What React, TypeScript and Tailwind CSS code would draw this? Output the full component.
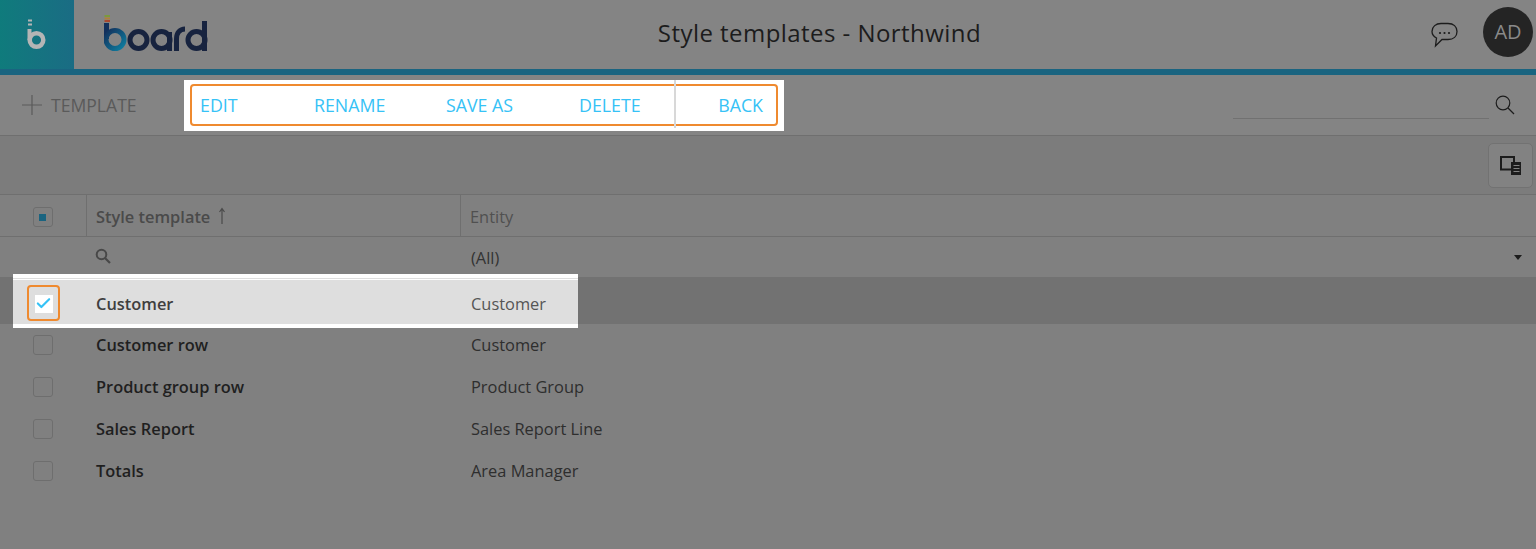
import { Check } from 'lucide-react'

const rows = [
  { name: 'Customer row', entity: 'Customer' },
  { name: 'Product group row', entity: 'Product Group' },
  { name: 'Sales Report', entity: 'Sales Report Line' },
  { name: 'Totals', entity: 'Area Manager' },
]

function BoardMark() {
  return (
    <svg width="24" height="32" viewBox="0 0 24 32" fill="none">
      <rect x="4" y="0.500" width="4" height="2" fill="#b5b5b5" />
      <rect x="4" y="4.500" width="4" height="2" fill="#b5b5b5" />
      <path d="M5.500 10v11" stroke="#b5b5b5" strokeWidth="4" />
      <circle cx="12.500" cy="21" r="6.800" stroke="#b5b5b5" strokeWidth="4.500" />
    </svg>
  )
}

function BoardLogo() {
  return (
    <svg width="104" height="37" viewBox="0 0 104 37" fill="none">
      <defs>
        <linearGradient id="logoB" x1="0" y1="0" x2="1" y2="1">
          <stop offset="0" stopColor="#12305c" />
          <stop offset="1" stopColor="#0f7ea0" />
        </linearGradient>
      </defs>
      <rect x="0.500" y="0" width="5.500" height="2" fill="#7c9a3c" />
      <rect x="0.500" y="2.500" width="5.500" height="2" fill="#b0803a" />
      <rect x="0.500" y="5" width="5.500" height="2" fill="#a8482f" />
      <path d="M2.500 8v16" stroke="#12305c" strokeWidth="5" />
      <circle cx="11" cy="24.500" r="9" stroke="url(#logoB)" strokeWidth="5" />
      <circle cx="34.500" cy="25" r="8.500" stroke="#17233f" strokeWidth="5" />
      <circle cx="57.500" cy="25" r="8.500" stroke="#17233f" strokeWidth="5" />
      <path d="M65.500 17v19" stroke="#17233f" strokeWidth="5" />
      <path d="M72.500 36V24c0-6 3.500-10 8.500-10" stroke="#17233f" strokeWidth="5" />
      <circle cx="92.500" cy="25" r="8.500" stroke="#17233f" strokeWidth="5" />
      <path d="M100.500 6v30" stroke="#17233f" strokeWidth="5" />
    </svg>
  )
}

function Box() {
  return <span className="block w-5 h-5 rounded-[3px] border border-[#6e6e6e]" />
}

export default function App() {
  return (
    <div
      className="relative w-full h-[549px] overflow-hidden bg-[#808080] text-[#272727]"
      style={{ fontFamily: '"Open Sans", sans-serif' }}
    >
      {/* Header */}
      <div className="flex items-stretch h-[75px] border-b-[6px] border-[#1a6480] bg-[#848484]">
        <div className="flex items-center justify-center w-[74px] pr-[2px] bg-gradient-to-r from-[#0f7b7c] to-[#1a6c84]">
          <BoardMark />
        </div>
        <div className="flex items-center pl-[30px] pb-[2px] w-[194px]">
          <BoardLogo />
        </div>
        <div className="flex-1 flex items-center justify-center text-[24px] text-[#1c1c1c] pb-[3px] tracking-[0.45px]">
          Style templates - Northwind
        </div>
        <div className="flex items-center w-[165px] justify-end pr-[3px]">
          <svg width="28" height="26" viewBox="0 0 28 26" fill="none" className="mr-[24px] mt-[1px]">
            <path
              d="M10 1.500h7c5.500 0 9 3 9 8s-3.500 8-9 8h-6l-6.500 6.500 1-8C2.700 14.500 1 12.300 1 9.500c0-5 4-8 9-8z"
              stroke="#1c1c1c"
              strokeWidth="1.300"
            />
            <circle cx="9" cy="11" r="1.100" fill="#1c1c1c" />
            <circle cx="13.500" cy="11" r="1.100" fill="#1c1c1c" />
            <circle cx="18" cy="11" r="1.100" fill="#1c1c1c" />
          </svg>
          <div className="flex items-center justify-center w-[50px] h-[50px] mb-[5px] rounded-full bg-[#242424] text-[#8a8a8a] text-[20px]">
            AD
          </div>
        </div>
      </div>

      {/* Toolbar */}
      <div className="flex items-center h-[61px] border-b border-[#6f6f6f] bg-[#848484]">
        <div className="flex items-center w-[184px] pl-[22px] text-[#5a5a5a] text-[17.600px]">
          <svg width="20" height="20" viewBox="0 0 20 20" fill="none" className="mr-[9px]">
            <path d="M10 0v20M0 10h20" stroke="#5a5a5a" strokeWidth="1.200" />
          </svg>
          TEMPLATE
        </div>
        <div className="flex items-center w-[600px] h-[51px] pl-[6px] pr-[6px] pt-[4px] pb-[5px] bg-white">
          <div className="flex items-center w-full h-full pt-[2px] rounded-[4px] border-2 border-[#ef8a2f] text-[#36c2f6] text-[17.800px]">
            <span className="w-[122px] pl-[8px]">EDIT</span>
            <span className="w-[132px]">RENAME</span>
            <span className="w-[133px]">SAVE AS</span>
            <span className="w-[96px]">DELETE</span>
            <span className="relative flex-1 text-right pr-[13px]">
              <span className="absolute left-[-1px] top-[-12px] bottom-[-9px] w-[2px] bg-[#d8d8d8]" />
              BACK
            </span>
          </div>
        </div>
        <div className="flex-1 flex items-center justify-end pr-[21px]">
          <span className="w-[256px] h-[22px] mt-[6px] border-b border-[#717171] mr-[6px]" />
          <svg width="20" height="20" viewBox="0 0 20 20" fill="none">
            <circle cx="8" cy="8" r="6.800" stroke="#1c1c1c" strokeWidth="1.200" />
            <path d="M13 13l6 6" stroke="#1c1c1c" strokeWidth="1.200" />
          </svg>
        </div>
      </div>

      {/* Grey band */}
      <div className="flex items-center justify-end h-[59px] pr-[3px] border-b border-[#6f6f6f] bg-[#7c7c7c]">
        <button className="flex items-center justify-center w-[45px] h-[45px] rounded-[5px] border border-[#727272] bg-[#828282]">
          <svg width="21" height="19" viewBox="0 0 21 19" fill="none">
            <path d="M1 1h13v12.500H1z" stroke="#1c1c1c" strokeWidth="2" />
            <rect x="11" y="6" width="10" height="13" fill="#1c1c1c" />
            <path d="M13.500 9.500h6M13.500 12.500h6M13.500 15.500h6" stroke="#828282" strokeWidth="1" />
          </svg>
        </button>
      </div>

      {/* Column headers */}
      <div className="flex h-[42px] border-b border-[#6f6f6f] text-[16.400px]">
        <div className="flex items-center justify-center w-[87px] pr-[1px] pt-[3px] border-r border-[#6f6f6f]">
          <span className="flex items-center justify-center w-5 h-5 rounded-[3px] border border-[#6e6e6e]">
            <span className="w-[7px] h-[7px] bg-[#1a6480]" />
          </span>
        </div>
        <div className="flex items-center w-[374px] pl-[9px] pt-[3px] border-r border-[#6f6f6f] text-[#4a4a4a] font-semibold">
          Style template
          <svg width="10" height="18" viewBox="0 0 10 18" fill="none" className="ml-[7px] mb-[3px]">
            <path d="M5 17V2M2.500 5 5 1.500 7.500 5" stroke="#4a4a4a" strokeWidth="1.200" />
          </svg>
        </div>
        <div className="flex items-center pl-[9px] pt-[3px] text-[#505050]">Entity</div>
      </div>

      {/* Filter row */}
      <div className="flex items-center h-[42px] border-b-2 border-[#727272] text-[16.400px]">
        <div className="w-[95px] shrink-0" />
        <svg width="16" height="16" viewBox="0 0 16 16" fill="none" className="mb-[3px]">
          <circle cx="6.500" cy="6.500" r="4.800" stroke="#484848" strokeWidth="2" />
          <path d="M10 10l5 5" stroke="#484848" strokeWidth="2.200" />
        </svg>
        <div className="w-[360px]" />
        <div className="flex-1 text-[#333333] pt-[3px]">(All)</div>
        <span className="mr-[14px] w-0 h-0 border-x-[4px] border-x-transparent border-t-[5px] border-t-[#1c1c1c]" />
      </div>

      {/* Selected row, spotlighted by the guide */}
      <div className="relative h-[45px] bg-[#727272] text-[16.400px]">
        <div className="absolute left-[13px] top-[-5px] flex items-center w-[565px] h-[54px] pt-[1px] border-y-[4px] border-white bg-[#dedede] shadow-[inset_0_1px_0_#dedede,inset_0_2px_0_#ffffff]">
          <span className="flex items-center justify-center ml-[14px] mt-[3px] w-[33px] h-[36px] rounded-[4px] border-2 border-[#ef8a2f]">
            <span className="flex items-center justify-center w-[18px] h-[18px] mt-[1px] bg-white">
              <Check size={17} strokeWidth={3} className="text-[#36c2f6]" />
            </span>
          </span>
          <span className="ml-[36px] mt-[6px] w-[375px] font-semibold text-[#3f3f3f]">Customer</span>
          <span className="mt-[6px] text-[#555555]">Customer</span>
        </div>
      </div>
      {rows.map((row) => (
        <div key={row.name} className="flex items-center h-[42px] text-[16.400px]">
          <div className="w-[96px] pl-[33px]">
            <Box />
          </div>
          <div className="w-[375px] font-semibold text-[#1f1f1f]">{row.name}</div>
          <div className="text-[#2e2e2e]">{row.entity}</div>
        </div>
      ))}
    </div>
  )
}
